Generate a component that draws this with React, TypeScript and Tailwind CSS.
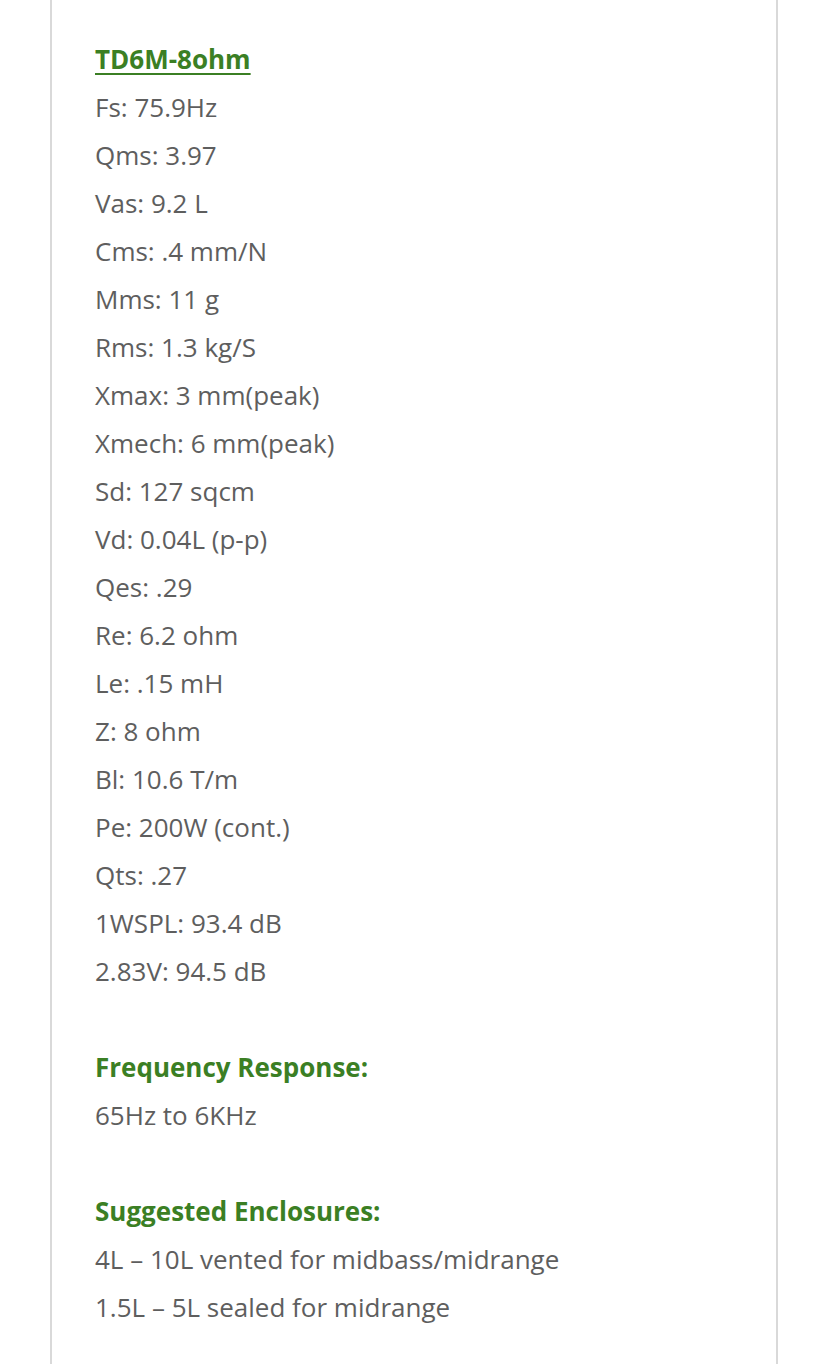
import React from "react";

const specs = [
  "Fs: 75.9Hz",
  "Qms: 3.97",
  "Vas: 9.2 L",
  "Cms: .4 mm/N",
  "Mms: 11 g",
  "Rms: 1.3 kg/S",
  "Xmax: 3 mm(peak)",
  "Xmech: 6 mm(peak)",
  "Sd: 127 sqcm",
  "Vd: 0.04L (p-p)",
  "Qes: .29",
  "Re: 6.2 ohm",
  "Le: .15 mH",
  "Z: 8 ohm",
  "Bl: 10.6 T/m",
  "Pe: 200W (cont.)",
  "Qts: .27",
  "1WSPL: 93.4 dB",
  "2.83V: 94.5 dB",
];

export default function App() {
  return (
    <div
      className="w-[828px] h-[1364px] bg-white overflow-hidden"
      style={{ fontFamily: '"Open Sans", "Noto Sans", sans-serif' }}
    >
      <div className="ml-[50px] w-[728px] h-full border-x-2 border-[#d9d9d9] pl-[43px] pt-[35px] text-[26px] leading-[48px] text-[#5e5e5e]">
        <div className="flex flex-col">
          <a className="font-bold text-[#3b7f24] underline underline-offset-[4px] decoration-2 self-start">
            TD6M-8ohm
          </a>
          {specs.map((s) => (
            <span key={s}>{s}</span>
          ))}
        </div>
        <div className="mt-[48px] flex flex-col">
          <span className="font-bold text-[#3b7f24]">Frequency Response:</span>
          <span>65Hz to 6KHz</span>
        </div>
        <div className="mt-[48px] flex flex-col">
          <span className="font-bold text-[#3b7f24]">Suggested Enclosures:</span>
          <span>4L – 10L vented for midbass/midrange</span>
          <span>1.5L – 5L sealed for midrange</span>
        </div>
      </div>
    </div>
  );
}
